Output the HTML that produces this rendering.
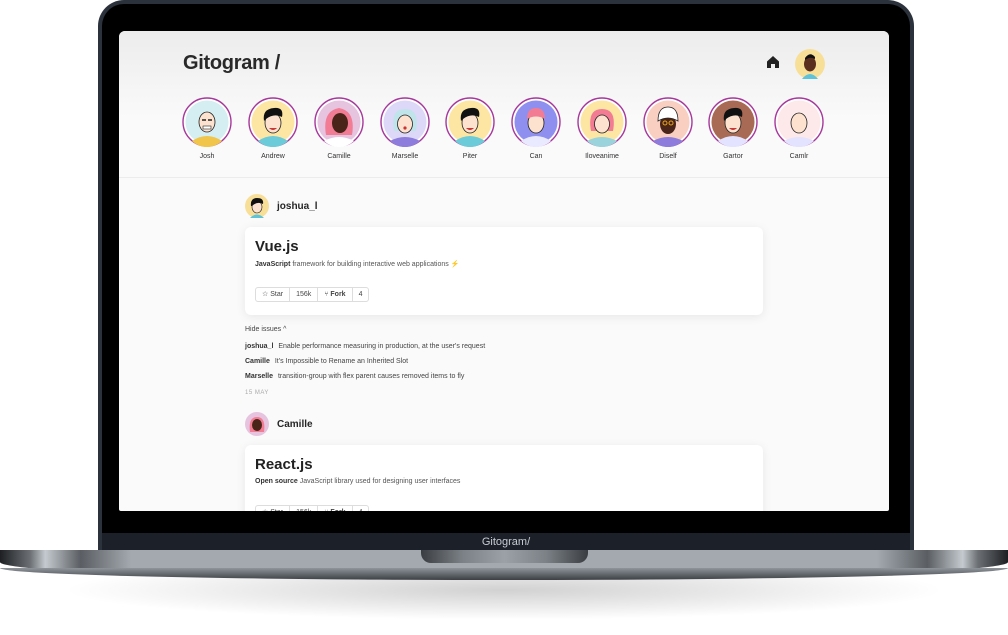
<!DOCTYPE html>
<html><head><meta charset="utf-8"><style>
*{margin:0;padding:0;box-sizing:border-box}
body{width:1008px;height:635px;background:#fff;position:relative;overflow:hidden;font-family:"Liberation Sans",sans-serif;color:#262626}
.shadow{position:absolute;left:60px;top:560px;width:888px;height:60px;border-radius:50%;background:radial-gradient(ellipse at center,rgba(0,0,0,.18),rgba(0,0,0,0) 70%)}
.lid{position:absolute;left:98px;top:0;width:816px;height:552px;background:#2c323c;border-radius:26px 26px 0 0}
.lidin{position:absolute;left:102px;top:4px;width:808px;height:548px;background:#000;border-radius:22px 22px 0 0}
.bez{position:absolute;left:102px;top:533px;width:808px;height:18px;background:#1b2029;color:#c8ccd2;font-size:11px;text-align:center;line-height:18px}
.base{position:absolute;left:0;top:550px;width:1008px;height:30px;border-radius:0 0 50% 50%/0 0 60% 60%;background:linear-gradient(90deg,#1d1f22 0%,#6c7075 3%,#c4cacf 4.5%,#5a5e63 8%,#a3a9af 13%,#a3a9af 87%,#5a5e63 92%,#c4cacf 95.5%,#6c7075 97%,#1d1f22 100%)}
.base:after{content:"";position:absolute;left:0;right:0;bottom:0;height:12px;background:linear-gradient(#8e949a,#3b3f44);border-radius:0 0 50% 50%/0 0 100% 100%}
.notch{position:absolute;left:421px;top:550px;width:167px;height:13px;border-radius:0 0 10px 10px;background:linear-gradient(90deg,#3a3d41,#7b8186 25%,#9ba1a6 50%,#7b8186 75%,#3a3d41)}
.screen{position:absolute;left:119px;top:31px;width:770px;height:480px;background:#fafafa;border-radius:6px 6px 2px 2px;overflow:hidden}
.head{position:absolute;left:0;top:0;width:770px;height:147px;background:linear-gradient(#ececec,#fafafa 60%);border-bottom:1px solid #ececec}
.logo{position:absolute;left:64px;top:21px;font-size:20px;font-weight:bold;color:#292929;letter-spacing:-.3px}
.home{position:absolute;left:647px;top:24px}
.me{position:absolute;left:676px;top:18px}
.av{position:absolute;top:66px;width:50px;text-align:center;font-size:7px;color:#333}
.av svg{display:block;margin:0 auto 6px}
.user{position:absolute;left:126px;display:flex;align-items:center;font-size:10px;font-weight:bold}
.user svg{margin-right:8px}
.card{position:absolute;left:126px;width:518px;background:#fff;border-radius:6px;box-shadow:0 2px 10px rgba(0,0,0,.08)}
.card h2{position:absolute;left:10px;top:11px;font-size:15px;font-weight:bold;color:#222}
.card p{position:absolute;left:10px;top:33px;font-size:7px;color:#555}
.card p b{color:#333}
.btns{position:absolute;left:10px;top:60px;display:flex;height:15px;border:1px solid #ddd;border-radius:3px;font-size:7px;color:#444}
.btns span{padding:0 6px;line-height:13px;border-right:1px solid #ddd}
.btns span:last-child{border:0}
.iss{position:absolute;left:126px;font-size:7px;color:#444}
.iss b{color:#333;margin-right:3px}
</style></head><body>
<div class="shadow"></div>
<div class="lid"></div><div class="lidin"></div>
<div class="screen">
 <div class="head">
  <div class="logo">Gitogram /</div>
  <svg class="home" width="14" height="14" viewBox="0 0 14 14"><path d="M7 1 L13 6.5 V13 H9 V9 H5 V13 H1 V6.5Z" fill="#222"/></svg>
  <svg class="me" width="30" height="30" viewBox="0 0 30 30"><circle cx="15" cy="15" r="15" fill="#f8df98"/><path d="M7 30 Q15 20 23 30Z" fill="#5ec3d8"/><ellipse cx="15" cy="15" rx="6" ry="7.5" fill="#5b2f1e"/><path d="M10 9 Q15 2 20 8 L20 10 Q15 7 10 11Z" fill="#111"/></svg>
 </div>
 <div class="av" style="left:63px"><svg width="50" height="50" viewBox="0 0 50 50"><circle cx="25" cy="25" r="24" fill="#fff" stroke="#a6379b" stroke-width="1.4"/><circle cx="25" cy="25" r="21.5" fill="#d5eef2"/><path d="M10 44 Q25 34 40 44 A21.5 21.5 0 0 1 10 44Z" fill="#f0c54a"/><ellipse cx="25" cy="25" rx="8" ry="10" fill="#fde3cf" stroke="#222" stroke-width=".8"/><path d="M20 23h4M26 23h4" stroke="#222" stroke-width="1.4"/><rect x="21" y="29" width="8" height="3" fill="#fff" stroke="#222" stroke-width=".6"/></svg>Josh</div>
 <div class="av" style="left:129px"><svg width="50" height="50" viewBox="0 0 50 50"><circle cx="25" cy="25" r="24" fill="#fff" stroke="#a6379b" stroke-width="1.4"/><circle cx="25" cy="25" r="21.5" fill="#fde6a3"/><path d="M10 44 Q25 34 40 44 A21.5 21.5 0 0 1 10 44Z" fill="#6ccbd8"/><ellipse cx="25" cy="26" rx="8" ry="10" fill="#fde3cf" stroke="#222" stroke-width=".8"/><path d="M16 24 Q14 12 26 11 Q36 10 34 20 Q26 16 18 22Z" fill="#111"/><path d="M21 31 Q25 35 29 31Z" fill="#c33"/></svg>Andrew</div>
 <div class="av" style="left:195px"><svg width="50" height="50" viewBox="0 0 50 50"><circle cx="25" cy="25" r="24" fill="#fff" stroke="#a6379b" stroke-width="1.4"/><circle cx="25" cy="25" r="21.5" fill="#e6c3df"/><path d="M12 38 Q8 14 25 11 Q42 14 38 38Z" fill="#f27c93"/><path d="M10 44 Q25 36 40 44 A21.5 21.5 0 0 1 10 44Z" fill="#fff"/><ellipse cx="26" cy="26" rx="8" ry="10" fill="#4a2418"/></svg>Camille</div>
 <div class="av" style="left:261px"><svg width="50" height="50" viewBox="0 0 50 50"><circle cx="25" cy="25" r="24" fill="#fff" stroke="#a6379b" stroke-width="1.4"/><circle cx="25" cy="25" r="21.5" fill="#ddd8f8"/><path d="M14 34 Q10 12 25 12 Q40 12 36 34Z" fill="#bfe4ea"/><path d="M10 44 Q25 36 40 44 A21.5 21.5 0 0 1 10 44Z" fill="#8d7cdc"/><ellipse cx="25" cy="27" rx="7.5" ry="9" fill="#fde3cf" stroke="#222" stroke-width=".8"/><circle cx="25" cy="31" r="1.6" fill="#c33"/></svg>Marselle</div>
 <div class="av" style="left:326px"><svg width="50" height="50" viewBox="0 0 50 50"><circle cx="25" cy="25" r="24" fill="#fff" stroke="#a6379b" stroke-width="1.4"/><circle cx="25" cy="25" r="21.5" fill="#fde6a3"/><path d="M10 44 Q25 34 40 44 A21.5 21.5 0 0 1 10 44Z" fill="#6ccbd8"/><ellipse cx="25" cy="26" rx="8" ry="10" fill="#fde3cf" stroke="#222" stroke-width=".8"/><path d="M16 24 Q14 12 26 11 Q36 10 34 20 Q26 16 18 22Z" fill="#111"/><path d="M21 31 Q25 35 29 31Z" fill="#c33"/></svg>Piter</div>
 <div class="av" style="left:392px"><svg width="50" height="50" viewBox="0 0 50 50"><circle cx="25" cy="25" r="24" fill="#fff" stroke="#a6379b" stroke-width="1.4"/><circle cx="25" cy="25" r="21.5" fill="#8f8ff0"/><path d="M10 44 Q25 34 40 44 A21.5 21.5 0 0 1 10 44Z" fill="#e9e9ff"/><ellipse cx="25" cy="26" rx="8" ry="10" fill="#fde3cf" stroke="#222" stroke-width=".8"/><path d="M16 22 Q16 11 25 11 Q34 11 34 22 Q25 17 16 22Z" fill="#f27c93"/></svg>Can</div>
 <div class="av" style="left:458px"><svg width="50" height="50" viewBox="0 0 50 50"><circle cx="25" cy="25" r="24" fill="#fff" stroke="#a6379b" stroke-width="1.4"/><circle cx="25" cy="25" r="21.5" fill="#fde6a3"/><path d="M14 34 Q10 12 25 12 Q40 12 36 34Z" fill="#f27c93"/><path d="M10 44 Q25 36 40 44 A21.5 21.5 0 0 1 10 44Z" fill="#9ad3dc"/><ellipse cx="25" cy="27" rx="7.5" ry="9" fill="#fde3cf" stroke="#222" stroke-width=".8"/></svg>Iloveanime</div>
 <div class="av" style="left:524px"><svg width="50" height="50" viewBox="0 0 50 50"><circle cx="25" cy="25" r="24" fill="#fff" stroke="#a6379b" stroke-width="1.4"/><circle cx="25" cy="25" r="21.5" fill="#f8cfc0"/><path d="M10 44 Q25 36 40 44 A21.5 21.5 0 0 1 10 44Z" fill="#8d7cdc"/><ellipse cx="25" cy="27" rx="8" ry="10" fill="#4a2418"/><path d="M15 24 Q15 10 25 10 Q35 10 35 24 Q25 18 15 24Z" fill="#fff" stroke="#222" stroke-width=".8"/><circle cx="22" cy="26" r="2" fill="none" stroke="#e6a21a"/><circle cx="28" cy="26" r="2" fill="none" stroke="#e6a21a"/></svg>Diself</div>
 <div class="av" style="left:589px"><svg width="50" height="50" viewBox="0 0 50 50"><circle cx="25" cy="25" r="24" fill="#fff" stroke="#a6379b" stroke-width="1.4"/><circle cx="25" cy="25" r="21.5" fill="#a86a54"/><path d="M10 44 Q25 34 40 44 A21.5 21.5 0 0 1 10 44Z" fill="#e3e3ff"/><ellipse cx="25" cy="26" rx="8" ry="10" fill="#fde3cf" stroke="#222" stroke-width=".8"/><path d="M16 24 Q14 12 26 11 Q36 10 34 20 Q26 16 18 22Z" fill="#111"/><path d="M21 31 Q25 35 29 31Z" fill="#c33"/></svg>Gartor</div>
 <div class="av" style="left:655px"><svg width="50" height="50" viewBox="0 0 50 50"><circle cx="25" cy="25" r="24" fill="#fff" stroke="#a6379b" stroke-width="1.4"/><circle cx="25" cy="25" r="21.5" fill="#fde9ea"/><path d="M10 44 Q25 36 40 44 A21.5 21.5 0 0 1 10 44Z" fill="#e3e3ff"/><ellipse cx="25" cy="26" rx="8" ry="10" fill="#fde3cf" stroke="#222" stroke-width=".8"/></svg>Camlr</div>

 <div class="user" style="top:163px"><svg width="24" height="24" viewBox="0 0 24 24"><circle cx="12" cy="12" r="12" fill="#f8df98"/><path d="M5 24 Q12 17 19 24Z" fill="#5ec3d8"/><ellipse cx="12" cy="13" rx="5" ry="6" fill="#fde3cf" stroke="#222" stroke-width=".6"/><path d="M6 12 Q5 4 12 4 Q19 4 18 10 Q12 7 7 12Z" fill="#111"/></svg>joshua_l</div>
 <div class="card" style="top:196px;height:88px">
  <h2>Vue.js</h2>
  <p><b>JavaScript</b> framework for building interactive web applications <span style="color:#f5c542">⚡</span></p>
  <div class="btns"><span>☆ Star</span><span>156k</span><span>⑂ <b>Fork</b></span><span>4</span></div>
 </div>
 <div class="iss" style="top:295px">Hide issues ^</div>
 <div class="iss" style="top:312px"><b>joshua_l</b> Enable performance measuring in production, at the user's request</div>
 <div class="iss" style="top:327px"><b>Camille</b> It's Impossible to Rename an Inherited Slot</div>
 <div class="iss" style="top:342px"><b>Marselle</b> transition-group with flex parent causes removed items to fly</div>
 <div class="iss" style="top:359px;font-size:6px;color:#aaa;letter-spacing:.5px">15 MAY</div>
 <div class="user" style="top:381px"><svg width="24" height="24" viewBox="0 0 24 24"><circle cx="12" cy="12" r="12" fill="#e6c3df"/><path d="M5 20 Q3 5 12 5 Q21 5 19 20Z" fill="#f27c93"/><ellipse cx="12" cy="13" rx="5" ry="6" fill="#4a2418"/></svg>Camille</div>
 <div class="card" style="top:414px;height:90px">
  <h2>React.js</h2>
  <p><b>Open source</b> JavaScript library used for designing user interfaces</p>
  <div class="btns"><span>☆ Star</span><span>156k</span><span>⑂ <b>Fork</b></span><span>4</span></div>
 </div>
</div>
<div class="bez">Gitogram/</div>
<div class="base"></div>
<div class="notch"></div>
</body></html>
